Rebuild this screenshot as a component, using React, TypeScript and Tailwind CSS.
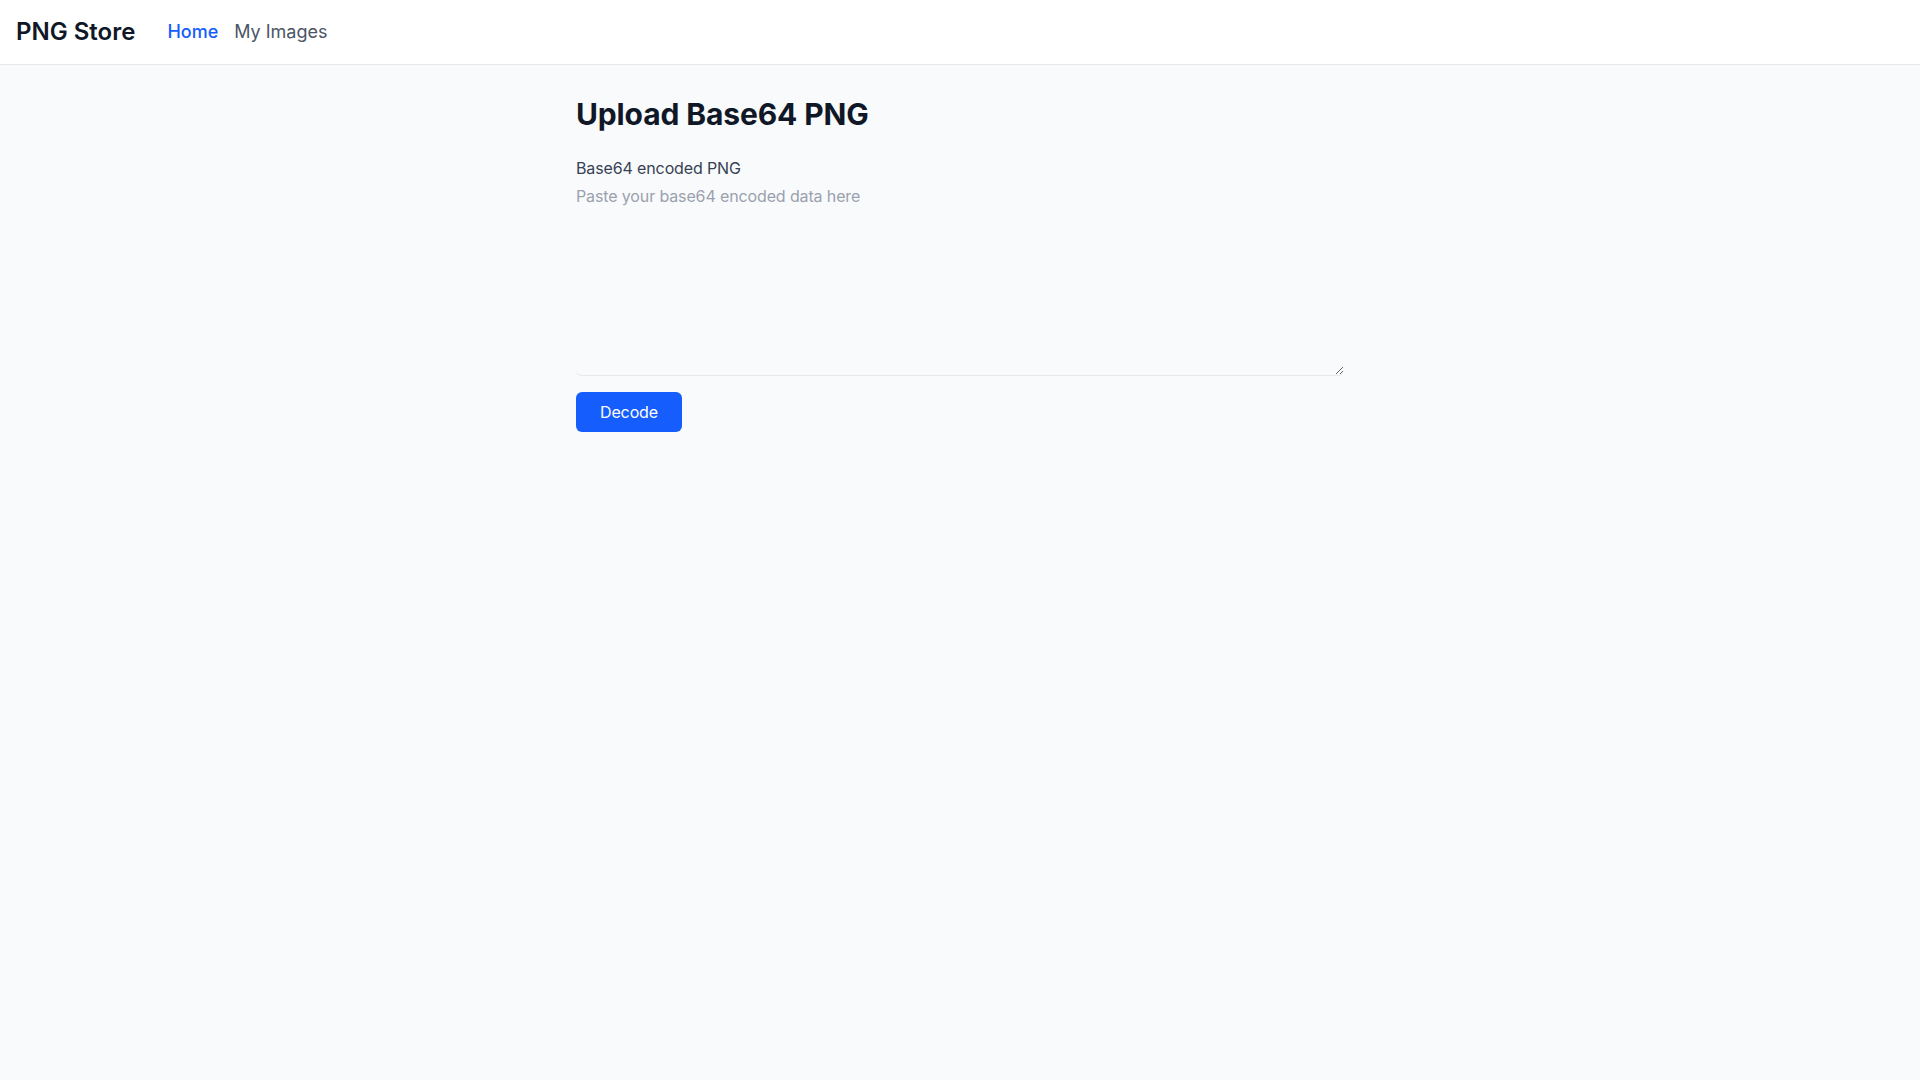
export default function App() {
  return (
    <div className="min-h-screen bg-gray-50 font-['Inter',sans-serif]">
      <header className="h-[65px] bg-white border-b border-gray-200 flex items-center px-4">
        <span className="text-2xl font-semibold text-gray-900 mr-8">PNG Store</span>
        <nav className="flex items-center gap-4 text-lg">
          <a className="text-blue-600 font-medium">Home</a>
          <a className="text-gray-600">My Images</a>
        </nav>
      </header>

      <main className="max-w-3xl mx-auto pt-[31px] pb-8 tracking-[-0.008em]">
        <h1 className="text-3xl font-bold text-gray-900 mb-6">Upload Base64 PNG</h1>
        <label className="block text-base text-gray-700">Base64 encoded PNG</label>
        <textarea
          placeholder="Paste your base64 encoded data here"
          className="mt-1 block w-full h-48 bg-transparent border-0 border-b border-gray-200 rounded-md text-base leading-6 tracking-[-0.008em] text-gray-900 placeholder:text-gray-400 outline-none"
        />
        <button className="mt-4 h-10 px-6 rounded-md bg-blue-600 text-white text-base">Decode</button>
      </main>
    </div>
  );
}
